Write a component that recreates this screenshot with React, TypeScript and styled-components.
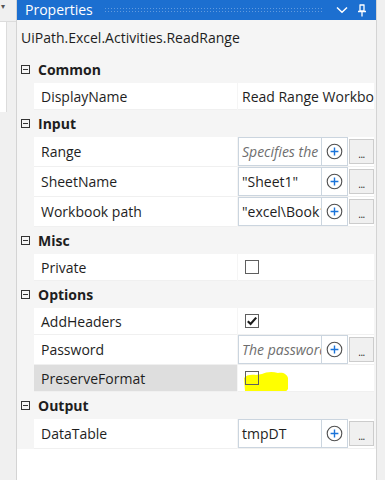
import styled, { createGlobalStyle } from 'styled-components';

const GlobalStyle = createGlobalStyle`
  body {
    margin: 0;
    font-family: 'Open Sans', 'Noto Sans', sans-serif;
    color: #1e1e1e;
  }
`;

type Item =
  | { kind: 'text'; label: string; value: string }
  | { kind: 'box'; label: string; value: string; placeholder?: boolean }
  | { kind: 'check'; label: string; checked: boolean; selected?: boolean; marked?: boolean };

interface Category {
  name: string;
  items: Item[];
}

const categories: Category[] = [
  { name: 'Common', items: [{ kind: 'text', label: 'DisplayName', value: 'Read Range Workbook' }] },
  {
    name: 'Input',
    items: [
      { kind: 'box', label: 'Range', value: 'Specifies the range', placeholder: true },
      { kind: 'box', label: 'SheetName', value: '"Sheet1"' },
      { kind: 'box', label: 'Workbook path', value: '"excel\\Book1.xlsx"' },
    ],
  },
  { name: 'Misc', items: [{ kind: 'check', label: 'Private', checked: false }] },
  {
    name: 'Options',
    items: [
      { kind: 'check', label: 'AddHeaders', checked: true },
      { kind: 'box', label: 'Password', value: 'The password', placeholder: true },
      { kind: 'check', label: 'PreserveFormat', checked: false, selected: true, marked: true },
    ],
  },
  { name: 'Output', items: [{ kind: 'box', label: 'DataTable', value: 'tmpDT' }] },
];

const Page = styled.div`
  display: flex;
  width: 385px;
  height: 480px;
  background: #f0f0f0;
  overflow: hidden;
`;

const LeftDock = styled.div`
  display: flex;
  flex-direction: column;
  width: 16px;
  border-right: 1px solid #d4d4d4;
  background: #f0f0f0;
`;

const DockTab = styled.div`
  height: 21px;
  border-bottom: 1px solid #dcdcdc;
  font-size: 8px;
  line-height: 12px;
  color: #555;
  padding-left: 1px;
`;

const DockPane = styled.div`
  width: 6px;
  height: 90px;
  background: #fff;
  border-right: 1px solid #dcdcdc;
`;

const Panel = styled.div`
  flex: 1;
  display: flex;
  flex-direction: column;
  background: #fff;
  border-right: 1px solid #d4d4d4;
`;

const RightDock = styled.div`
  width: 8px;
`;

const TitleBar = styled.div`
  display: flex;
  align-items: center;
  height: 20px;
  padding: 0 0 0 8px;
  background: #1c6fd0;
  color: #fff;
  font-size: 14px;
`;

const TitleText = styled.span`
  line-height: 20px;
`;

const Grip = styled.div`
  flex: 1;
  height: 6px;
  margin: 0 13px 0 11px;
  background-image: radial-gradient(circle, rgba(255, 255, 255, 0.3) 0.7px, transparent 1px);
  background-size: 3px 3px;
`;

const TitleIcon = styled.svg`
  display: block;
  margin-right: 9px;
`;

const Description = styled.div`
  height: 36px;
  padding: 6px 0 0 4px;
  box-sizing: border-box;
  background: #f5f5f5;
  font-size: 14px;
  line-height: 24px;
`;

const Grid = styled.div`
  display: flex;
  flex-direction: column;
  background: #f5f5f5;
  padding-right: 2px;
`;

const CategoryRow = styled.div`
  display: flex;
  align-items: center;
  height: 27px;
  font-weight: 700;
  font-size: 14px;
`;

const Expander = styled.span`
  position: relative;
  width: 9px;
  height: 9px;
  margin: 0 8px 0 4px;
  border: 1px solid #333;
  box-sizing: border-box;
  &::after {
    content: '';
    position: absolute;
    left: 1px;
    right: 1px;
    top: 3px;
    height: 1px;
    background: #333;
  }
`;

const ItemRow = styled.div<{ $tall: boolean }>`
  display: grid;
  grid-template-columns: 17px 203px 1fr;
  height: ${(p) => (p.$tall ? 30 : 27)}px;
  font-size: 14px;
`;

const Label = styled.div<{ $selected?: boolean }>`
  display: flex;
  align-items: center;
  padding-left: 7px;
  background: ${(p) => (p.$selected ? '#dedede' : '#fff')};
  border-bottom: 1px solid #f0f0f0;
  white-space: nowrap;
`;

const Value = styled.div`
  position: relative;
  display: flex;
  align-items: center;
  min-width: 0;
  margin-left: 1px;
  background: #fff;
  border-bottom: 1px solid #f0f0f0;
  white-space: nowrap;
  overflow: hidden;
`;

const PlainValue = styled.span`
  padding-left: 4px;
`;

const Editor = styled.div`
  display: flex;
  align-self: stretch;
`;

const TextBox = styled.div<{ $placeholder?: boolean }>`
  width: 84px;
  box-sizing: border-box;
  display: flex;
  align-items: center;
  padding-left: 3px;
  border: 1px solid #cbd5df;
  overflow: hidden;
  color: ${(p) => (p.$placeholder ? '#6e6e6e' : '#1e1e1e')};
  font-style: ${(p) => (p.$placeholder ? 'italic' : 'normal')};
`;

const PlusButton = styled.div`
  width: 26px;
  box-sizing: border-box;
  display: flex;
  align-items: center;
  justify-content: center;
  border: 1px solid #cbd5df;
  border-left: none;
`;

const EllipsisButton = styled.div`
  width: 25px;
  margin: 2px 0 2px 1px;
  box-sizing: border-box;
  display: flex;
  align-items: flex-end;
  justify-content: center;
  padding-bottom: 4px;
  background: #f0f0f0;
  border: 1px solid #cccccc;
  font-size: 10px;
  line-height: 10px;
  letter-spacing: -0.5px;
`;

const CheckBox = styled.span`
  position: relative;
  z-index: 1;
  width: 14px;
  height: 14px;
  margin-left: 7px;
  box-sizing: border-box;
  border: 1px solid #5f5f5f;
  background: transparent;
  display: flex;
  align-items: center;
  justify-content: center;
`;

const Highlight = styled.svg`
  position: absolute;
  left: 4px;
  top: 4px;
`;

const Filler = styled.div`
  flex: 1;
  background: #fff;
`;

const PlusIcon = () => (
  <svg width="17" height="17" viewBox="0 0 17 17">
    <circle cx="8.5" cy="8.5" r="7.3" fill="none" stroke="#505050" strokeWidth="1.1" />
    <path d="M8.5 4.6v7.8M4.6 8.5h7.8" stroke="#1a73d9" strokeWidth="1.4" />
  </svg>
);

const CheckMark = () => (
  <svg width="12" height="12" viewBox="0 0 12 12">
    <path d="M1.8 6.2 4.6 9 10.2 2.6" fill="none" stroke="#1b1b1b" strokeWidth="2.2" />
  </svg>
);

const renderValue = (item: Item) => {
  if (item.kind === 'text') return <PlainValue>{item.value}</PlainValue>;
  if (item.kind === 'box')
    return (
      <Editor>
        <TextBox $placeholder={item.placeholder}>{item.value}</TextBox>
        <PlusButton>
          <PlusIcon />
        </PlusButton>
        <EllipsisButton>...</EllipsisButton>
      </Editor>
    );
  return (
    <>
      {item.marked && (
        <Highlight width="48" height="26" viewBox="0 0 48 26">
          <path
            d="M2 9 C4 6 9 5 14 6 L20 5 C24 3 30 2 36 4 C41 3 45 5 46 9 L46 20 C44 24 38 24 32 23 L16 24 C10 24 5 24 3 22 Z"
            fill="#ffff00"
          />
        </Highlight>
      )}
      <CheckBox>{item.checked && <CheckMark />}</CheckBox>
    </>
  );
};

export default function App() {
  return (
    <Page>
      <GlobalStyle />
      <LeftDock>
        <DockTab>▾</DockTab>
        <DockPane />
      </LeftDock>
      <Panel>
        <TitleBar>
          <TitleText>Properties</TitleText>
          <Grip />
          <TitleIcon width="12" height="8" viewBox="0 0 12 8">
            <path d="M1 1.5 6 6.3 11 1.5" fill="none" stroke="#fff" strokeWidth="1.5" />
          </TitleIcon>
          <TitleIcon width="10" height="13" viewBox="0 0 10 13">
            <path d="M2.5 1h5M3 1v6h4V1M1 7.5h8M5 7.5V12.5" fill="none" stroke="#fff" strokeWidth="1.3" />
          </TitleIcon>
        </TitleBar>
        <Description>UiPath.Excel.Activities.ReadRange</Description>
        <Grid>
          {categories.map((cat) => (
            <div key={cat.name}>
              <CategoryRow>
                <Expander />
                {cat.name}
              </CategoryRow>
              {cat.items.map((item) => (
                <ItemRow key={item.label} $tall={item.kind === 'box'}>
                  <span />
                  <Label $selected={item.kind === 'check' && item.selected}>{item.label}</Label>
                  <Value>{renderValue(item)}</Value>
                </ItemRow>
              ))}
            </div>
          ))}
        </Grid>
        <Filler />
      </Panel>
      <RightDock />
    </Page>
  );
}
